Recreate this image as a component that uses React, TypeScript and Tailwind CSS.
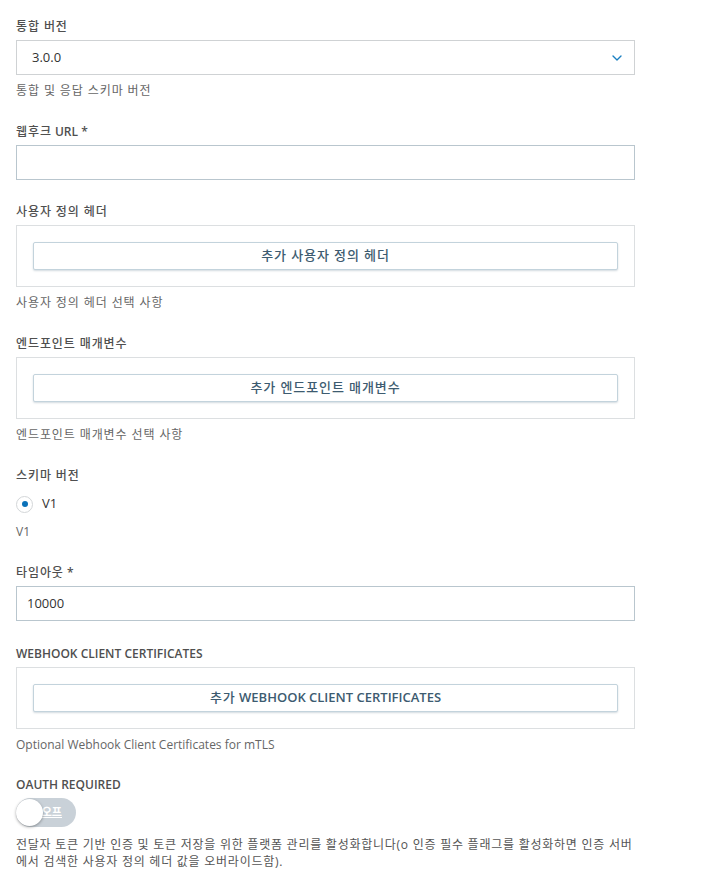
import { ChevronDown } from "lucide-react";

const font = {
  fontFamily: '"Open Sans", "Noto Sans CJK KR", sans-serif',
};

// korean runs render a bit narrower than the reference, so space them out
const Ko = ({ children, className = "" }: { children: React.ReactNode; className?: string }) => (
  <span className={`tracking-[0.9px] ${className}`}>{children}</span>
);

const Label = ({ children }: { children: React.ReactNode }) => (
  <div className="text-[12px] leading-[16px] font-semibold text-[#4f4f4f] mb-[5px]">{children}</div>
);

const Help = ({ children }: { children: React.ReactNode }) => (
  <div className="mt-2 text-[12px] leading-[16px] text-[#666]">{children}</div>
);

const AddBox = ({ children }: { children: React.ReactNode }) => (
  <div className="border border-[#dcdfe1] px-4 py-4">
    <button className="w-full h-[28px] border border-[#c3d3dc] rounded-[2px] bg-white shadow-[0_1px_2px_rgba(80,110,130,0.25)] text-[13px] font-semibold text-[#3d5b70]">
      {children}
    </button>
  </div>
);

export default function App() {
  return (
    <div style={font} className="bg-white min-h-screen pt-[19px] px-4">
      <div className="w-[619px] flex flex-col">
        <section className="mb-[25px]">
          <Label><Ko className="font-medium">통합 버전</Ko></Label>
          <div className="h-[35px] border border-[#cfd2d4] flex items-center justify-between pl-[15px] pr-[9px]">
            <span className="text-[13px] text-[#333]">3.0.0</span>
            <ChevronDown className="w-[16px] h-[16px] text-[#1a7fc1]" strokeWidth={2} />
          </div>
          <Help><Ko className="tracking-[0.6px]">통합 및 응답 스키마 버전</Ko></Help>
        </section>

        <section className="mb-[24px]">
          <Label><Ko className="font-medium">웹후크</Ko> URL *</Label>
          <div className="h-[35px] border border-[#b9c6ce]" />
        </section>

        <section className="mb-[25px]">
          <Label><Ko className="font-medium">사용자 정의 헤더</Ko></Label>
          <AddBox><Ko className="font-medium">추가 사용자 정의 헤더</Ko></AddBox>
          <Help><Ko className="tracking-[0.6px]">사용자 정의 헤더 선택 사항</Ko></Help>
        </section>

        <section className="mb-[25px]">
          <Label><Ko className="font-medium">엔드포인트 매개변수</Ko></Label>
          <AddBox><Ko className="font-medium">추가 엔드포인트 매개변수</Ko></AddBox>
          <Help><Ko className="tracking-[0.6px]">엔드포인트 매개변수 선택 사항</Ko></Help>
        </section>

        <section className="mb-[25px]">
          <Label><Ko className="font-medium">스키마 버전</Ko></Label>
          <div className="h-[30px] flex items-center gap-[9px]">
            <span className="w-[17px] h-[17px] rounded-full border border-[#d3d6d8] flex items-center justify-center">
              <span className="w-[6px] h-[6px] rounded-full bg-[#0b72b9]" />
            </span>
            <span className="text-[13px] text-[#333]">V1</span>
          </div>
          <div className="mt-[5px] text-[12px] leading-[16px] text-[#666]">V1</div>
        </section>

        <section className="mb-[25px]">
          <Label><Ko className="font-medium">타임아웃</Ko> *</Label>
          <div className="h-[35px] border border-[#b9c6ce] flex items-center pl-[10px]">
            <span className="text-[13px] text-[#333]">10000</span>
          </div>
        </section>

        <section className="mb-[24px]">
          <Label>WEBHOOK CLIENT CERTIFICATES</Label>
          <AddBox><Ko className="font-medium">추가</Ko> WEBHOOK CLIENT CERTIFICATES</AddBox>
          <Help>Optional Webhook Client Certificates for mTLS</Help>
        </section>

        <section className="mb-4">
          <Label>OAUTH REQUIRED</Label>
          <div className="relative w-[60px] h-[29px] rounded-full bg-[#c9d1d8] flex items-center justify-end pr-[14px]">
            <span className="text-[11px] font-semibold text-white underline">오프</span>
            <span className="absolute left-0 top-[1px] w-[27px] h-[27px] rounded-full bg-white shadow-[0_1px_3px_rgba(0,0,0,0.35)]" />
          </div>
          <p className="mt-[9px] text-[12px] leading-[17px] text-[#555] tracking-[0.75px]">
            전달자 토큰 기반 인증 및 토큰 저장을 위한 플랫폼 관리를 활성화합니다(o 인증 필수 플래그를 활성화하면 인증 서버에서 검색한 사용자 정의 헤더 값을 오버라이드함).
          </p>
        </section>
      </div>
    </div>
  );
}
